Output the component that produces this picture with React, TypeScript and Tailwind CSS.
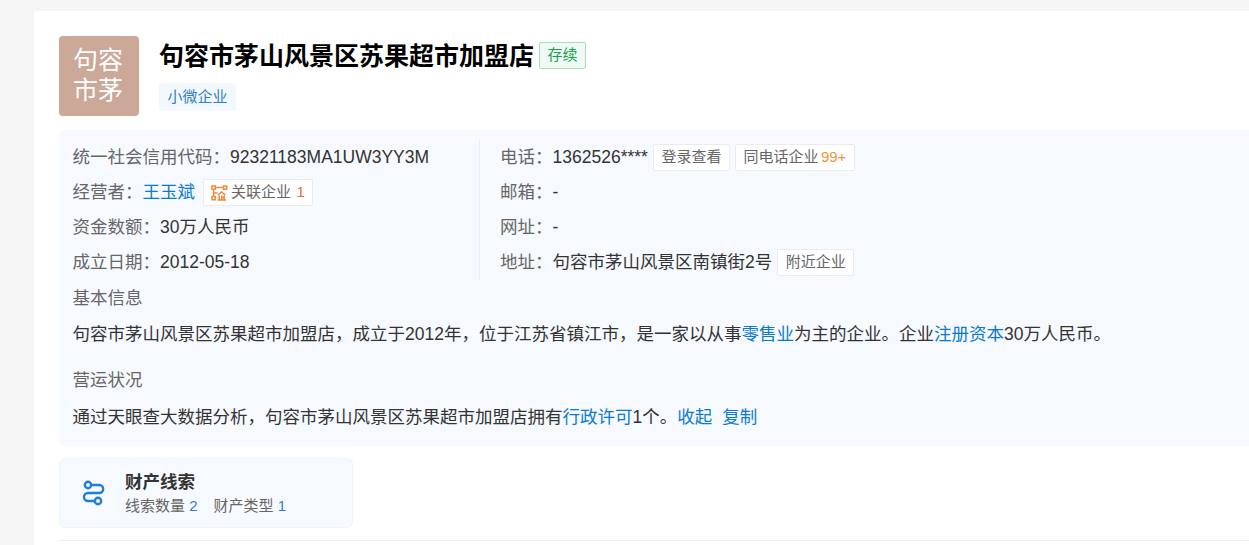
import React from 'react';

const font = { fontFamily: '"Liberation Sans", "Noto Sans CJK SC", sans-serif' };

function Tag({ children }: { children: React.ReactNode }) {
  return (
    <span className="ml-[5px] inline-flex h-[27px] items-center rounded-[2px] border border-[#e8ebf0] bg-white px-[7.5px] text-[15px] text-[#666]">
      {children}
    </span>
  );
}

function Row({ label, children }: { label: string; children: React.ReactNode }) {
  return (
    <div className="flex h-[35px] items-center whitespace-nowrap text-[17.5px] text-[#333]">
      <span className="text-[#666]">{label}：</span>
      <span className="flex items-center">{children}</span>
    </div>
  );
}

function RelatedIcon() {
  return (
    <svg width="17" height="16" viewBox="0 0 17 16" fill="none" stroke="#ee8a3c" strokeWidth="1.5" className="mr-[3px]">
      <rect x="1" y="1" width="3.2" height="3.2" />
      <rect x="12.5" y="1" width="3.2" height="3.2" />
      <rect x="1" y="11.5" width="3.2" height="3.2" />
      <path d="M4.2 2.6h8.3M2.6 4.2v7.3M2.6 8h4" />
      <path d="M7 10l3.6-3 3.8 3M8.2 10.5v4.5h5v-4.5M10.8 10.5v4.5M10.8 12.5h2.4M6.5 15h8.5" />
    </svg>
  );
}

function ClueIcon() {
  return (
    <svg width="24" height="26" viewBox="0 0 24 26" fill="none" stroke="#1f7fd6" strokeWidth="2.4">
      <circle cx="6" cy="5" r="3.2" />
      <circle cx="16" cy="21" r="3.2" />
      <path d="M9.2 5h8a4 4 0 0 1 0 8H6a4 4 0 0 0 0 8h6.8" />
    </svg>
  );
}

export default function App() {
  return (
    <div className="h-[545px] w-[1249px] overflow-hidden bg-[#f5f5f5] pl-[34px] pt-[11px]" style={font}>
      <div className="h-[600px] w-[1300px] bg-white pl-[25px] pt-[25px]">
        {/* Header */}
        <div className="flex">
          <div className="flex h-20 w-20 items-center justify-center rounded-[4px] bg-[#cba898] pb-[2px] pr-[2px] text-center text-[25px] leading-[30px] text-[#fff]">
            句容
            <br />
            市茅
          </div>
          <div className="ml-5">
            <div className="flex h-[40px] items-center">
              <h1 className="text-[25px] font-bold leading-[40px] text-[#000]">句容市茅山风景区苏果超市加盟店</h1>
              <span className="mb-[2px] ml-[5px] inline-flex h-[27px] items-center rounded-[2px] border border-[#a8dcbc] bg-[#eefaf2] px-[7.5px] text-[15px] text-[#1f9d55]">
                存续
              </span>
            </div>
            <span className="mt-[7px] inline-flex h-[28px] items-center rounded-[3px] bg-[#f2f8fd] px-[8.5px] text-[15px] text-[#2f80c8]">
              小微企业
            </span>
          </div>
        </div>

        {/* Info panel */}
        <div className="mt-[14px] h-[316px] w-[1240px] rounded-[6px] bg-[#f6f9fd] pl-[13.5px] pt-[10px]">
          <div className="flex">
            <div className="w-[407px] border-r border-[#e8edf3]">
              <Row label="统一社会信用代码">92321183MA1UW3YY3M</Row>
              <Row label="经营者">
                <span className="text-[#0b7ad1]">王玉斌</span>
                <span className="ml-[7.5px] inline-flex h-[27px] items-center rounded-[2px] border border-[#e8ebf0] bg-white px-[7.5px] text-[15px] text-[#666]">
                  <RelatedIcon />
                  关联企业<span className="ml-[5.5px] text-[#ee6a3c]">1</span>
                </span>
              </Row>
              <Row label="资金数额">30万人民币</Row>
              <Row label="成立日期">2012-05-18</Row>
            </div>
            <div className="ml-[20.5px]">
              <Row label="电话">
                1362526****
                <Tag>登录查看</Tag>
                <Tag>
                  同电话企业<span className="ml-[2.5px] text-[#e8963c]">99+</span>
                </Tag>
              </Row>
              <Row label="邮箱">-</Row>
              <Row label="网址">-</Row>
              <Row label="地址">
                句容市茅山风景区南镇街2号
                <Tag>附近企业</Tag>
              </Row>
            </div>
          </div>
          <div className="mt-[3px] text-[17.5px] leading-[30px] text-[#666]">基本信息</div>
          <p className="mt-[2px] text-[17.5px] leading-[38px] text-[#333]">
            句容市茅山风景区苏果超市加盟店，成立于2012年，位于江苏省镇江市，是一家以从事
            <span className="text-[#0b7ad1]">零售业</span>为主的企业。企业<span className="text-[#0b7ad1]">注册资本</span>
            30万人民币。
          </p>
          <div className="mt-[10px] text-[17.5px] leading-[35px] text-[#666]">营运状况</div>
          <p className="text-[17.5px] leading-[38px] text-[#333]">
            通过天眼查大数据分析，句容市茅山风景区苏果超市加盟店拥有<span className="text-[#0b7ad1]">行政许可</span>1个。
            <span className="text-[#0b7ad1]">收起</span>
            <span className="ml-[10px] text-[#0b7ad1]">复制</span>
          </p>
        </div>

        {/* Clue card */}
        <div className="mt-[12px] flex h-[70px] w-[294px] items-center rounded-[6px] border border-[#f0f4f9] bg-[#f6f9fd] pl-[22px]">
          <ClueIcon />
          <div className="ml-[19px]">
            <div className="mb-[1px] text-[17.5px] font-bold leading-[22px] text-[#333]">财产线索</div>
            <div className="mt-[3px] text-[15px] leading-[20px] text-[#666]">
              线索数量 <span className="text-[#2f80c8]">2</span>
              <span className="ml-[16px]">财产类型</span> <span className="text-[#2f80c8]">1</span>
            </div>
          </div>
        </div>
        <div className="mt-[12px] h-px w-[1240px] bg-[#f0f0f0]" />
      </div>
    </div>
  );
}
